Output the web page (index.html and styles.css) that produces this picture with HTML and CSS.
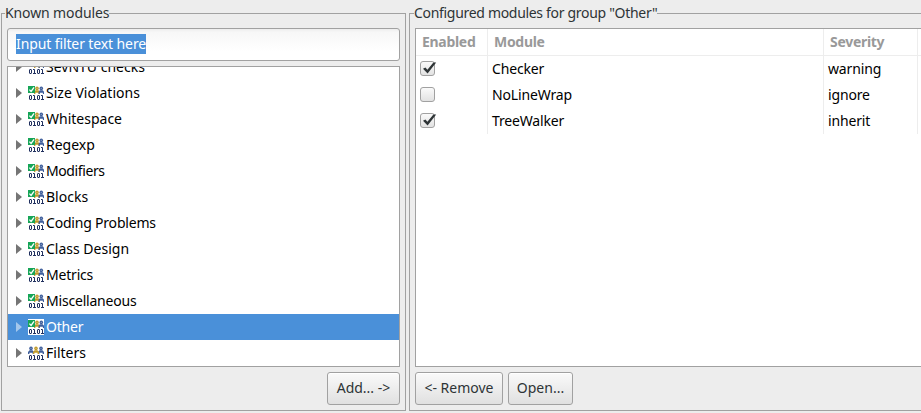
FILE: index.html
```html
<!DOCTYPE html>
<html lang="en">
<head>
<meta charset="utf-8">
<title>Modules</title>
<link rel="stylesheet" href="styles.css">
</head>
<body>
<svg class="defs" width="0" height="0">
  <symbol id="bits" viewBox="0 0 16 16">
    <g fill="none" stroke="#20305f" stroke-width="1">
      <rect x="1.5" y="10.5" width="2" height="4" rx=".5"/>
      <rect x="9.5" y="10.5" width="2" height="4" rx=".5"/>
      <path d="M5 10.5h1.5V15M5 14.5h3M13 10.5h1.5V15M13 14.5h3"/>
    </g>
  </symbol>
  <symbol id="person" viewBox="0 0 6 8">
    <path d="M0 8V6l1.5-1.8h3L6 6v2H4.6V6.8H1.4V8z"/>
    <circle cx="3" cy="2.4" r="1.8"/>
    <circle cx="3" cy="2.4" r=".7" fill="#fff" fill-opacity=".35"/>
  </symbol>
  <symbol id="group" viewBox="0 0 16 16">
    <use href="#bits"/>
    <use href="#person" x="6" y="1" width="6" height="8" fill="#c09a2a"/>
    <use href="#person" x="10.3" y="1" width="6" height="8" fill="#3f5f9c"/>
    <path d="M0 1h7v7H0z" fill="#16a557"/>
    <path d="M1.4 4.6l1.7 1.8L6 2.4" fill="none" stroke="#fff" stroke-width="1.3"/>
  </symbol>
  <symbol id="plain" viewBox="0 0 16 16">
    <use href="#bits"/>
    <use href="#person" x="0" y="1" width="6" height="8" fill="#3f5f9c"/>
    <use href="#person" x="10" y="1" width="6" height="8" fill="#3f5f9c"/>
    <use href="#person" x="5" y="1" width="6" height="8" fill="#c09a2a"/>
  </symbol>
  <symbol id="tick" viewBox="0 0 17 16">
    <path d="M3 7.8l2.4-1.4 2 2.4L13.4 1.6h2.8L7.6 12.6z" fill="#2e3436"/>
  </symbol>
</svg>
<main class="panes">
  <fieldset class="pane">
    <legend><span class="known">Known modules</span></legend>
    <div class="filter"><span>Input filter text here</span></div>
    <ul class="tree">
      <li><i></i><svg><use href="#group"/></svg><span>SevNTU checks</span></li>
      <li><i></i><svg><use href="#group"/></svg><span>Size Violations</span></li>
      <li><i></i><svg><use href="#group"/></svg><span>Whitespace</span></li>
      <li><i></i><svg><use href="#group"/></svg><span>Regexp</span></li>
      <li><i></i><svg><use href="#group"/></svg><span class="tight">Modifiers</span></li>
      <li><i></i><svg><use href="#group"/></svg><span>Blocks</span></li>
      <li><i></i><svg><use href="#group"/></svg><span class="snug">Coding Problems</span></li>
      <li><i></i><svg><use href="#group"/></svg><span>Class Design</span></li>
      <li><i></i><svg><use href="#group"/></svg><span class="snug">Metrics</span></li>
      <li><i></i><svg><use href="#group"/></svg><span class="snug">Miscellaneous</span></li>
      <li class="selected"><i></i><svg><use href="#group"/></svg><span class="snug">Other</span></li>
      <li><i></i><svg><use href="#plain"/></svg><span>Filters</span></li>
    </ul>
    <div class="actions end"><button class="add">Add... -&gt;</button></div>
  </fieldset>
  <fieldset class="pane right">
    <legend><span class="configured">Configured modules for group "Other"</span></legend>
    <div class="table">
      <div class="row head"><div>Enabled</div><div>Module</div><div>Severity</div><div></div></div>
      <div class="row"><div><b class="check"><svg><use href="#tick"/></svg></b></div><div>Checker</div><div>warning</div><div></div></div>
      <div class="row"><div><b class="check"></b></div><div>NoLineWrap</div><div>ignore</div><div></div></div>
      <div class="row"><div><b class="check"><svg><use href="#tick"/></svg></b></div><div>TreeWalker</div><div>inherit</div><div></div></div>
    </div>
    <div class="actions"><button class="remove">&lt;- Remove</button><button class="open">Open...</button></div>
  </fieldset>
</main>
</body>
</html>
```
FILE: styles.css
```css
* { box-sizing: border-box; }
body {
  margin: 0;
  height: 413px;
  overflow: hidden;
  background: #ededed;
  color: #000;
  font: 14px/20px "Noto Sans", "Open Sans", sans-serif;
}
.defs { display: block; }
.panes {
  display: grid;
  grid-template-columns: 405px 530px;
  gap: 3px;
  padding: 3px 0 0 1px;
}
.pane {
  height: 408px;
  min-width: 0;
  margin: 0;
  padding: 5px;
  border: 1px solid #a1a1a1;
}
.pane legend {
  height: 20px;
  margin-left: -2px;
  padding: 0;
  color: #2e3436;
}
.right legend { margin-left: -1px; }
.known { letter-spacing: -0.12px; }
.configured { letter-spacing: -0.31px; }
.filter {
  height: 33px;
  padding: 5px 8px;
  border: 1px solid #a1a1a1;
  border-radius: 3px;
  background: linear-gradient(#ededed, #f7f7f7 3px, #fff 22px);
}
.filter span {
  display: inline-block;
  height: 20px;
  background: #4a90d9;
  color: #fff;
  letter-spacing: -0.11px;
}
.tree {
  height: 301px;
  margin: 5px 0 0;
  padding: 0;
  overflow: hidden;
  border: 1px solid #a1a1a1;
  background: #fff;
  list-style: none;
}
.tree li {
  display: flex;
  align-items: center;
  height: 26px;
  padding-left: 8px;
}
.tree li:first-child { margin-top: -13px; }
.tree i {
  width: 6px;
  margin-right: 6px;
  border: solid transparent;
  border-width: 5px 0 5px 6px;
  border-left-color: #757575;
}
.tree svg { width: 16px; height: 16px; margin-right: 2px; }
.tree .selected { background: #4a90d9; color: #fff; }
.selected i { border-left-color: #a4c7ec; }
.selected svg { background: #fff; }
.snug { letter-spacing: -0.2px; }
.tight { letter-spacing: -0.4px; }
.actions { display: flex; gap: 5px; margin-top: 5px; }
.end { justify-content: flex-end; }
button {
  height: 33px;
  padding: 0 0 1px;
  border: 1px solid #a1a1a1;
  border-radius: 3px;
  background: linear-gradient(#fafafa, #e0e0e0);
  box-shadow: inset 0 1px #fff;
  color: #2e3436;
  font: inherit;
}
.add { width: 73px; }
.remove { width: 88px; }
.open { width: 65px; }
.table {
  height: 339px;
  border: 1px solid #a1a1a1;
  background: #fff;
}
.row {
  display: grid;
  grid-template-columns: 72px 336px 94px 1fr;
  height: 26px;
  line-height: 26px;
  letter-spacing: -0.15px;
}
.row > div { padding-left: 4px; border-right: 1px solid #ededed; }
.row > div:last-child { border-right: 0; }
.head {
  height: 27px;
  border-bottom: 1px solid #ededed;
  color: #999;
  font-weight: 700;
  letter-spacing: -0.3px;
}
.head > div { padding-left: 6px; }
.check {
  display: block;
  width: 15px;
  height: 15px;
  margin-top: 5px;
  border: 1px solid #a1a1a1;
  border-radius: 3px;
  background: linear-gradient(#fafafa, #e2e2e2);
}
.check svg { display: block; width: 17px; height: 16px; margin: -1px; }
```
